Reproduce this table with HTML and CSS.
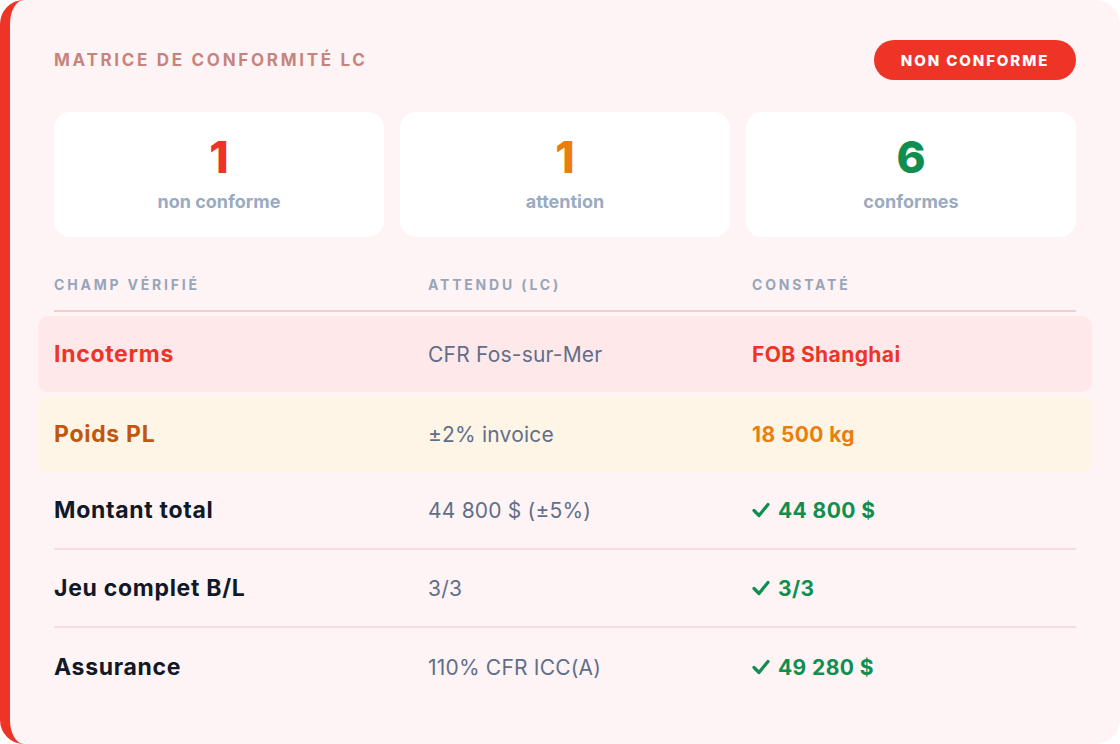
FILE: index.html
```html
<!DOCTYPE html>
<html lang="fr">
<head>
<meta charset="utf-8">
<title>Matrice de conformité LC</title>
<link rel="stylesheet" href="styles.css">
</head>
<body>
<div class="card">
  <div class="head">
    <div class="title">Matrice de conformité LC</div>
    <div class="badge">Non conforme</div>
  </div>
  <div class="stats">
    <div class="stat"><div class="num red">1</div><div class="lbl">non conforme</div></div>
    <div class="stat"><div class="num orange">1</div><div class="lbl">attention</div></div>
    <div class="stat"><div class="num green">6</div><div class="lbl">conformes</div></div>
  </div>
  <div class="thead">
    <div>Champ vérifié</div>
    <div>Attendu (LC)</div>
    <div>Constaté</div>
  </div>
  <div class="row bad">
    <div class="c1">Incoterms</div>
    <div class="c2">CFR Fos-sur-Mer</div>
    <div class="c3">FOB Shanghai</div>
  </div>
  <div class="row warn">
    <div class="c1">Poids PL</div>
    <div class="c2">±2% invoice</div>
    <div class="c3">18 500 kg</div>
  </div>
  <div class="row ok">
    <div class="c1">Montant total</div>
    <div class="c2">44 800 $ (±5%)</div>
    <div class="c3"><svg class="chk" viewBox="0 0 18 16" width="18" height="16"><path d="M2 8.5 L7 13.5 L16 2.5" /></svg>44 800 $</div>
  </div>
  <div class="row ok">
    <div class="c1">Jeu complet B/L</div>
    <div class="c2">3/3</div>
    <div class="c3"><svg class="chk" viewBox="0 0 18 16" width="18" height="16"><path d="M2 8.5 L7 13.5 L16 2.5" /></svg>3/3</div>
  </div>
  <div class="row ok last">
    <div class="c1">Assurance</div>
    <div class="c2">110% CFR ICC(A)</div>
    <div class="c3"><svg class="chk" viewBox="0 0 18 16" width="18" height="16"><path d="M2 8.5 L7 13.5 L16 2.5" /></svg>49 280 $</div>
  </div>
</div>
</body>
</html>
```

FILE: styles.css
```css
* { box-sizing: border-box; }
html, body { margin: 0; padding: 0; background: #ffffff; }
body {
  font-family: Inter, "Liberation Sans", sans-serif;
  width: 1120px;
  height: 744px;
  overflow: hidden;
}
.card {
  width: 1120px;
  height: 744px;
  background: #fff4f5;
  border-left: 10px solid #ee3426;
  border-radius: 24px;
  padding: 40px 44px 40px 44px;
}
.head {
  display: flex;
  justify-content: space-between;
  align-items: center;
  height: 40px;
}
.title {
  text-transform: uppercase;
  font-weight: 700;
  font-size: 17px;
  letter-spacing: 2.7px;
  color: #c6847d;
}
.badge {
  height: 40px;
  width: 202px;
  justify-content: center;
  border-radius: 20px;
  background: #ee3426;
  color: #ffffff;
  text-transform: uppercase;
  font-weight: 800;
  font-size: 15px;
  letter-spacing: 1.9px;
  display: flex;
  align-items: center;
}
.stats {
  margin-top: 32px;
  display: grid;
  grid-template-columns: 1fr 1fr 1fr;
  gap: 16px;
}
.stat {
  height: 125px;
  background: #ffffff;
  border-radius: 16px;
  display: flex;
  flex-direction: column;
  align-items: center;
  padding-top: 20px;
}
.num {
  font-size: 44px;
  font-weight: 800;
  line-height: 50px;
}
.red { color: #ee3426; }
.orange { color: #ea7e0c; }
.green { color: #0e8f4f; }
.lbl {
  margin-top: 9px;
  font-size: 18px;
  font-weight: 700;
  color: #9aabc1;
}
.thead {
  margin-top: 39px;
  display: grid;
  grid-template-columns: 374px 324px 1fr;
  font-size: 14px;
  font-weight: 700;
  letter-spacing: 2.8px;
  text-transform: uppercase;
  color: #97a5b9;
  padding-bottom: 17px;
  border-bottom: 2px solid #f8cccc;
}
.row {
  display: grid;
  grid-template-columns: 374px 324px 1fr;
  align-items: center;
  font-size: 21px;
  height: 78px;
  border-bottom: 2px solid #fadada;
}
.row.last { border-bottom: none; }
.row.bad, .row.warn {
  height: 76px;
  margin: 4px -16px 0;
  padding: 0 16px;
  border-bottom: none;
  border-radius: 10px;
}
.row.bad { background: #ffe8ea; }
.row.warn { background: #fff5e7; }
.c1 { font-weight: 700; color: #111827; font-size: 23px; letter-spacing: 0.7px; }
.c2 { font-weight: 400; color: #5f6f8a; letter-spacing: 0.2px; }
.c3 { font-weight: 700; color: #0e8f4f; letter-spacing: 0.4px; display: flex; align-items: center; }
.bad .c1, .bad .c3 { color: #ee3426; }
.warn .c1 { color: #c2570c; }
.warn .c3 { color: #ea7e0c; }
.chk {
  margin-right: 8px;
  fill: none;
  stroke: #0e8f4f;
  stroke-width: 3.2;
  stroke-linecap: round;
  stroke-linejoin: round;
}
```
